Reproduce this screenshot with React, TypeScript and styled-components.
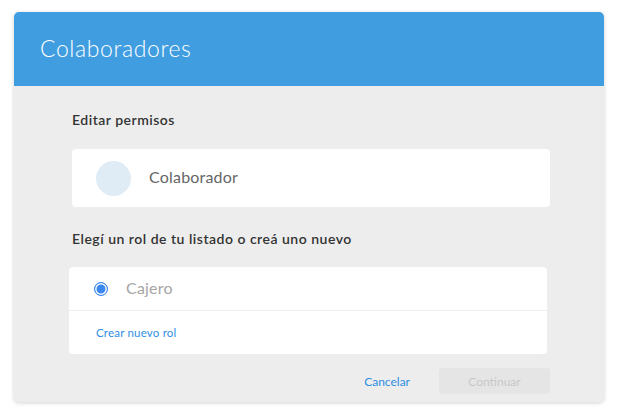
import styled, { createGlobalStyle } from 'styled-components'

const GlobalStyle = createGlobalStyle`
  html, body {
    margin: 0;
    padding: 0;
    background: #ffffff;
    font-family: Lato, "Open Sans", sans-serif;
  }
`

export default function App() {
  return (
    <>
      <GlobalStyle />
      <Page>
        <Dialog>
          <Header>
            <Title>Colaboradores</Title>
          </Header>

          <Body>
            <SectionLabel>Editar permisos</SectionLabel>
            <Card>
              <UserRow>
                <Avatar />
                <UserName>Colaborador</UserName>
              </UserRow>
            </Card>

            <SectionLabel>Elegí un rol de tu listado o creá uno nuevo</SectionLabel>
            <Card $shift={-3}>
              <RoleRow>
                <Radio />
                <RoleName>Cajero</RoleName>
              </RoleRow>
              <CreateRow>
                <LinkText>Crear nuevo rol</LinkText>
              </CreateRow>
            </Card>

            <Footer>
              <CancelButton>Cancelar</CancelButton>
              <ContinueButton disabled>Continuar</ContinueButton>
            </Footer>
          </Body>
        </Dialog>
      </Page>
    </>
  )
}

const Page = styled.div`
  padding: 12px 15px 12px 14px;
`

const Dialog = styled.div`
  width: 590px;
  height: 390px;
  border-radius: 5px;
  overflow: hidden;
  background: #ededed;
  box-shadow: 0 1px 4px rgba(0, 0, 0, 0.18);
  display: flex;
  flex-direction: column;
`

const Header = styled.div`
  height: 74px;
  background: #409ddf;
  display: flex;
  align-items: center;
  padding-left: 26px;
  padding-bottom: 2px;
  box-sizing: border-box;
`

const Title = styled.h1`
  margin: 0;
  color: #ffffff;
  font-size: 23px;
  font-weight: 300;
  letter-spacing: 0.6px;
`

const Body = styled.div`
  flex: 1;
  display: flex;
  flex-direction: column;
  padding: 24px 54px 0 58px;
`

const SectionLabel = styled.div`
  font-size: 14px;
  line-height: 20px;
  font-weight: 600;
  letter-spacing: 0.5px;
  color: #333333;
  margin-bottom: 19px;

  & + div + & {
    margin-top: 22px;
    margin-bottom: 18px;
  }
`

const Card = styled.div<{ $shift?: number }>`
  background: #ffffff;
  border-radius: 4px;
  margin-left: ${(p) => p.$shift ?? 0}px;
  margin-right: ${(p) => -(p.$shift ?? 0)}px;
`

const UserRow = styled.div`
  height: 58px;
  display: flex;
  align-items: center;
  padding-left: 24px;
  gap: 18px;
`

const Avatar = styled.div`
  width: 35px;
  height: 35px;
  border-radius: 50%;
  background: #e0ecf5;
`

const UserName = styled.span`
  font-size: 16px;
  letter-spacing: 0.2px;
  color: #666666;
  margin-top: -3px;
`

const RoleRow = styled.div`
  height: 43px;
  display: flex;
  align-items: center;
  padding-left: 25px;
  gap: 18px;
  border-bottom: 1px solid #eeeeee;
`

const Radio = styled.span`
  width: 14px;
  height: 14px;
  border-radius: 50%;
  box-sizing: border-box;
  border: 1.5px solid #3b87f0;
  background: #3b87f0;
  box-shadow: inset 0 0 0 1.5px #ffffff;
`

const RoleName = styled.span`
  font-size: 16px;
  letter-spacing: 0.2px;
  color: #a6a6a6;
  margin-top: -2px;
`

const CreateRow = styled.div`
  height: 43px;
  display: flex;
  align-items: center;
  padding-left: 27px;
`

const LinkText = styled.span`
  font-size: 11.5px;
  letter-spacing: 0.2px;
  color: #2f8ee5;
`

const Footer = styled.div`
  display: flex;
  justify-content: flex-end;
  align-items: center;
  gap: 29px;
  margin-top: 14px;
`

const CancelButton = styled.button`
  border: none;
  background: none;
  padding: 0;
  font-family: inherit;
  font-size: 12px;
  color: #2f8ee5;
  cursor: pointer;
`

const ContinueButton = styled.button`
  width: 111px;
  height: 26px;
  border: none;
  border-radius: 4px;
  background: #e5e5e5;
  color: #c8c8c8;
  font-family: inherit;
  font-size: 12px;
`
